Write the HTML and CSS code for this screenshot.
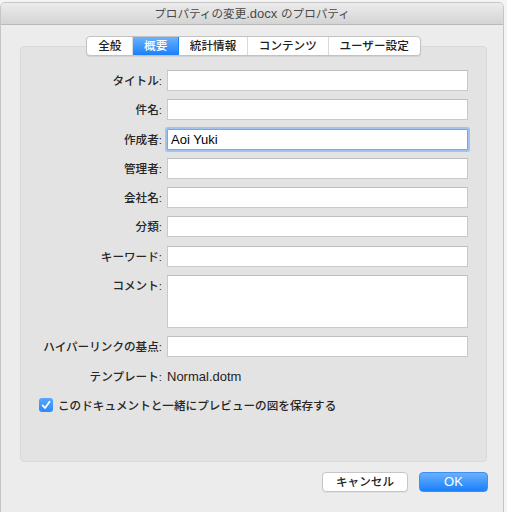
FILE: index.html
```html
<!DOCTYPE html>
<html lang="ja">
<head>
<meta charset="utf-8">
<title>プロパティ</title>
<link rel="stylesheet" href="styles.css">
</head>
<body>
<div class="window">
  <div class="titlebar">プロパティの変更<span class="latin">.docx </span>のプロパティ</div>
  <div class="content">
    <div class="tabs">
      <div class="tab">全般</div>
      <div class="tab selected">概要</div>
      <div class="tab">統計情報</div>
      <div class="tab">コンテンツ</div>
      <div class="tab last">ユーザー設定</div>
    </div>
    <div class="panel">
      <div class="form">
        <label class="label">タイトル:</label>
        <div class="field"></div>
        <label class="label">件名:</label>
        <div class="field"></div>
        <label class="label">作成者:</label>
        <div class="field focused"><span class="latin">Aoi Yuki</span></div>
        <label class="label">管理者:</label>
        <div class="field"></div>
        <label class="label">会社名:</label>
        <div class="field"></div>
        <label class="label">分類:</label>
        <div class="field"></div>
        <label class="label">キーワード:</label>
        <div class="field"></div>
        <label class="label top">コメント:</label>
        <div class="field area"></div>
        <label class="label">ハイパーリンクの基点:</label>
        <div class="field"></div>
        <div class="label">テンプレート:</div>
        <div class="value latin">Normal.dotm</div>
        <div class="check-row">
          <span class="checkbox">
            <svg width="14" height="14" viewBox="0 0 14 14"><path d="M3.6 7.4 L6 10 L10.6 3.8" fill="none" stroke="#fff" stroke-width="1.8" stroke-linecap="round" stroke-linejoin="round"/></svg>
          </span>
          <span>このドキュメントと一緒にプレビューの図を保存する</span>
        </div>
      </div>
    </div>
    <div class="footer">
      <div class="btn cancel">キャンセル</div>
      <div class="btn ok"><span class="latin">OK</span></div>
    </div>
  </div>
</div>
</body>
</html>
```

FILE: styles.css
```css
html, body {
  margin: 0;
  padding: 0;
}
body {
  background: #f4f4f4;
  font-family: "Liberation Sans", "Noto Sans CJK JP", sans-serif;
  font-size: 11.6px;
  font-weight: 500;
  color: #262626;
  width: 507px;
  height: 512px;
  overflow: hidden;
}
.latin {
  font-family: "Liberation Sans", Arial, sans-serif;
  font-size: 13px;
  font-weight: 400;
}
.window {
  margin-top: 2px;
  width: 504px;
  height: 520px;
  background: #ececec;
  border: 1px solid #c6c6c6;
  border-radius: 5px 5px 6px 6px;
  box-sizing: border-box;
}
.titlebar {
  height: 21px;
  line-height: 21px;
  border-bottom: 1px solid #b9b9b9;
  background: linear-gradient(#ececec, #d4d4d4);
  border-radius: 4px 4px 0 0;
  text-align: center;
  color: #4a4a4a;
  font-weight: 400;
}
.content {
  padding: 11px 18px 0 19px;
  display: flex;
  flex-direction: column;
}
.tabs {
  align-self: center;
  margin-left: 2px;
  display: flex;
  height: 20px;
  box-sizing: border-box;
  border: 1px solid #c2c2c2;
  border-radius: 4px;
  background: #fff;
  box-shadow: 0 1px 1px rgba(0,0,0,0.08);
  position: relative;
  z-index: 2;
  overflow: hidden;
}
.tab {
  padding: 0 10.8px;
  line-height: 18px;
  color: #202020;
  border-right: 1px solid #dadada;
}
.tab.last {
  border-right: none;
}
.tab.selected {
  background: linear-gradient(#6bb2fb, #1b80fb);
  color: #fff;
  border-right-color: #1b80fb;
}
.panel {
  margin-top: -10px;
  width: 467px;
  height: 416px;
  box-sizing: border-box;
  background: #e3e3e3;
  border: 1px solid #d9d9d9;
  border-radius: 4px;
  padding: 23px 18px 0 18px;
}
.form {
  display: grid;
  grid-template-columns: 123px 301px;
  grid-template-rows: repeat(7, 21px) 53px repeat(3, 21px);
  column-gap: 5px;
  row-gap: 8.3px;
}
.label {
  text-align: right;
  line-height: 21px;
  white-space: nowrap;
  color: #262626;
}
.label.top {
  align-self: start;
}
.field {
  height: 21px;
  box-sizing: border-box;
  background: #fff;
  border: 1px solid #c9c9c9;
  border-top-color: #bdbdbd;
  padding: 0 3px;
  line-height: 19px;
  color: #000;
}
.field.area {
  height: 53px;
}
.field.focused {
  border-color: #78a6e6;
  box-shadow: 0 0 0 2px #a2c3f0;
  border-radius: 1px;
}
.value {
  line-height: 21px;
  color: #1e1e1e;
}
.check-row {
  grid-column: 1 / -1;
  display: flex;
  align-items: center;
  gap: 5px;
  color: #262626;
}
.checkbox {
  width: 14px;
  height: 14px;
  border-radius: 3px;
  background: linear-gradient(#57a6fb, #2a89fb);
  display: flex;
}
.footer {
  display: flex;
  justify-content: flex-end;
  gap: 11px;
  margin-top: 10px;
  margin-right: -3px;
}
.btn {
  height: 20px;
  box-sizing: border-box;
  border-radius: 4px;
  text-align: center;
  line-height: 18px;
}
.btn.cancel {
  width: 86px;
  background: #fff;
  border: 1px solid #c6c6c6;
  box-shadow: 0 1px 0 rgba(0,0,0,0.05);
  color: #222;
}
.btn.ok {
  width: 69px;
  background: linear-gradient(#6ab1fb, #1a7ffb);
  border: 1px solid #3d8ff5;
  color: #fff;
}
```
